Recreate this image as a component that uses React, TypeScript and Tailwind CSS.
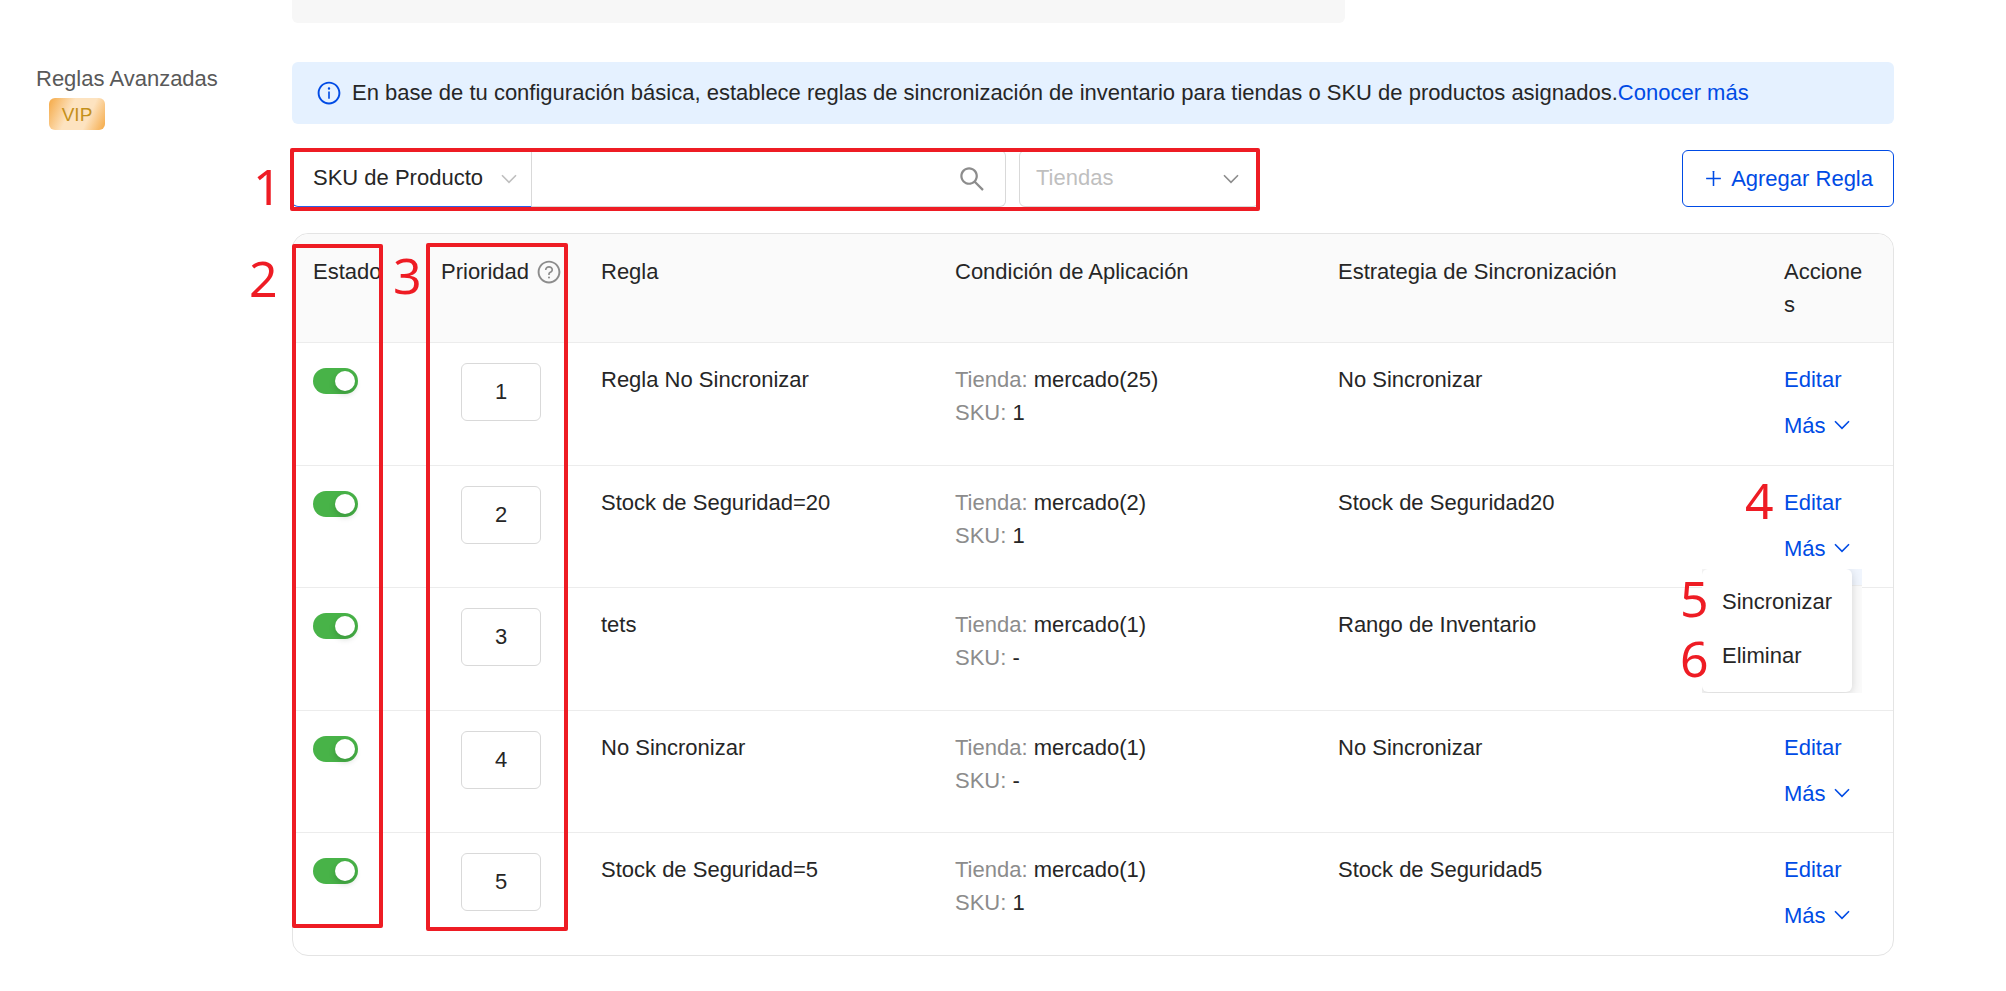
import React from "react";
import {
  AiOutlineInfoCircle,
  AiOutlinePlus,
  AiOutlineQuestionCircle,
  AiOutlineSearch,
} from "react-icons/ai";

type Rule = {
  priority: number;
  name: string;
  stores: string;
  sku: string;
  strategy: string;
  menuOpen?: boolean;
};

const rules: Rule[] = [
  {
    priority: 1,
    name: "Regla No Sincronizar",
    stores: "mercado(25)",
    sku: "1",
    strategy: "No Sincronizar",
  },
  {
    priority: 2,
    name: "Stock de Seguridad=20",
    stores: "mercado(2)",
    sku: "1",
    strategy: "Stock de Seguridad20",
    menuOpen: true,
  },
  {
    priority: 3,
    name: "tets",
    stores: "mercado(1)",
    sku: "-",
    strategy: "Rango de Inventario",
  },
  {
    priority: 4,
    name: "No Sincronizar",
    stores: "mercado(1)",
    sku: "-",
    strategy: "No Sincronizar",
  },
  {
    priority: 5,
    name: "Stock de Seguridad=5",
    stores: "mercado(1)",
    sku: "1",
    strategy: "Stock de Seguridad5",
  },
];

function Chevron({ className = "" }: { className?: string }) {
  return (
    <svg
      viewBox="0 0 16 10"
      fill="none"
      stroke="currentColor"
      strokeWidth="1.6"
      aria-hidden="true"
      className={`h-[10px] w-4 ${className}`}
    >
      <path d="M1 1.2 8 8.4l7-7.2" />
    </svg>
  );
}

function Mark({ className, children }: { className: string; children: React.ReactNode }) {
  return (
    <span
      className={`pointer-events-none absolute z-20 font-['Noto_Sans',sans-serif] text-[50px] leading-[52px] text-[#ee1c24] ${className}`}
    >
      {children}
    </span>
  );
}

function Outline({ className }: { className: string }) {
  return (
    <div
      className={`pointer-events-none absolute z-10 rounded-[2px] border-4 border-[#ee1c24] ${className}`}
    />
  );
}

function ActionsMenu() {
  return (
    <div className="absolute top-[103px] right-[31px] z-10 h-[124px] w-[160px] overflow-hidden bg-[#fafafa]">
      <div className="absolute top-0 right-0 h-[17px] w-5 border-b border-[#eeeeee] bg-[#f0f5fd]" />
      <div className="relative flex h-[123px] w-[150px] flex-col rounded-md bg-white pt-[6px] shadow-[0_2px_10px_rgba(0,0,0,0.16)]">
        <button type="button" className="h-[54px] px-5 text-left">
          Sincronizar
        </button>
        <button type="button" className="h-[54px] px-5 text-left">
          Eliminar
        </button>
      </div>
    </div>
  );
}

function RuleRow({ rule }: { rule: Rule }) {
  return (
    <tr className="h-[123px] border-b border-[#ececec] align-top last:border-b-0 even:h-[122px]">
      <td className="px-5 pt-[25px]">
        <input
          type="checkbox"
          role="switch"
          defaultChecked
          aria-label={`Estado de ${rule.name}`}
          className="block h-[26px] w-[45px] appearance-none rounded-full bg-[#bfbfbf] p-[3px] before:block before:size-5 before:rounded-full before:bg-white before:shadow-[0_3px_6px_rgba(0,35,11,0.2)] checked:bg-[#48b348] checked:before:ml-auto"
        />
      </td>
      <td className="px-5 pt-5">
        <input
          type="text"
          defaultValue={rule.priority}
          aria-label={`Prioridad de ${rule.name}`}
          className="mx-auto block h-[58px] w-20 rounded-md border border-[#d9d9d9] text-center"
        />
      </td>
      <td className="px-5 pt-5">{rule.name}</td>
      <td className="px-5 pt-5">
        <p>
          <span className="text-[#8c8c8c]">Tienda:</span> {rule.stores}
        </p>
        <p>
          <span className="text-[#8c8c8c]">SKU:</span> {rule.sku}
        </p>
      </td>
      <td className="px-5 pt-5">{rule.strategy}</td>
      <td className="relative px-5 pt-5">
        <div className="flex flex-col items-start gap-[13px] text-[#004be5]">
          <a href="#editar">Editar</a>
          <button type="button" className="flex items-center gap-2">
            Más
            <Chevron />
          </button>
        </div>
        {rule.menuOpen && (
          <>
            <ActionsMenu />
            <Mark className="top-[8px] -left-[19px]">4</Mark>
            <Mark className="top-[106px] -left-[84px]">5</Mark>
            <Mark className="top-[166px] -left-[84px]">6</Mark>
          </>
        )}
      </td>
    </tr>
  );
}

function Toolbar() {
  return (
    <div className="mt-[26px] flex items-start justify-between gap-6">
      <div className="relative flex">
        <div className="relative">
          <select
            aria-label="Buscar por"
            className="block h-[57px] w-[240px] appearance-none rounded-l-md border border-[#d9d9d9] border-b-[#2a62e8] bg-white pb-[2px] pl-5 outline-none"
          >
            <option>SKU de Producto</option>
          </select>
          <Chevron className="pointer-events-none absolute top-6 right-[15px] text-[#bfbfbf]" />
        </div>
        <div className="flex h-[57px] w-[474px] items-center rounded-r-md border border-l-0 border-[#d9d9d9] pr-[18px]">
          <input
            type="text"
            aria-label="SKU de Producto"
            className="h-full min-w-0 flex-1 px-4 outline-none"
          />
          <button type="button" aria-label="Buscar">
            <AiOutlineSearch className="size-[30px] text-[#8c8c8c]" />
          </button>
        </div>
        <div className="relative ml-[13px]">
          <select
            aria-label="Tiendas"
            className="block h-[57px] w-[240px] appearance-none rounded-md border border-[#d9d9d9] bg-white pb-[2px] pl-4 text-[#bfbfbf] outline-none"
          >
            <option>Tiendas</option>
          </select>
          <Chevron className="pointer-events-none absolute top-6 right-5 text-[#8c8c8c]" />
        </div>
        <Outline className="-top-[2px] -right-[1px] -bottom-1 -left-[2px]" />
        <Mark className="top-[10px] -left-[39px]">1</Mark>
      </div>
      <button
        type="button"
        className="flex h-[57px] items-center gap-[7px] rounded-md border border-[#004be5] px-5 text-[#004be5]"
      >
        <AiOutlinePlus className="size-[21px]" />
        Agregar Regla
      </button>
    </div>
  );
}

function RulesTable() {
  return (
    <div className="relative mt-[26px]">
      <div className="rounded-2xl border border-[#e4e4e4]">
        <table className="w-full table-fixed border-collapse text-left">
          <thead>
            <tr className="h-[108px] border-b border-[#ececec] align-top">
              <th className="w-32 rounded-tl-2xl bg-[#fafafa] px-5 pt-[21px] font-normal">
                Estado
              </th>
              <th className="w-40 bg-[#fafafa] px-5 pt-[21px] font-normal">
                <span className="flex items-center gap-[7px]">
                  Prioridad
                  <AiOutlineQuestionCircle className="size-[26px] shrink-0 text-[#8c8c8c]" />
                </span>
              </th>
              <th className="w-[354px] bg-[#fafafa] px-5 pt-[21px] font-normal">Regla</th>
              <th className="w-[383px] bg-[#fafafa] px-5 pt-[21px] font-normal">
                Condición de Aplicación
              </th>
              <th className="bg-[#fafafa] px-5 pt-[21px] font-normal">
                Estrategia de Sincronización
              </th>
              <th className="w-[129px] rounded-tr-2xl bg-[#fafafa] pt-[21px] pr-6 pl-5 font-normal break-all">
                Acciones
              </th>
            </tr>
          </thead>
          <tbody>
            {rules.map((rule) => (
              <RuleRow key={rule.priority} rule={rule} />
            ))}
          </tbody>
        </table>
      </div>
      <Outline className="top-[11px] bottom-7 left-0 w-[91px]" />
      <Outline className="top-[10px] bottom-[25px] left-[134px] w-[142px]" />
      <Mark className="top-[19px] -left-[43px]">2</Mark>
      <Mark className="top-[16px] left-[101px]">3</Mark>
    </div>
  );
}

export default function App() {
  return (
    <div className="min-h-screen bg-white pb-9 font-['Liberation_Sans',Arial,sans-serif] text-[22px] leading-[33px] text-[#262626]">
      <div className="pr-28 pl-[292px]">
        <div className="h-[23px] w-[1053px] max-w-full rounded-b-md bg-[#f7f7f7]" />
      </div>
      <div className="mt-[39px] flex pr-28">
        <div className="w-[292px] shrink-0 pl-9 text-[#595959]">
          <h2>Reglas Avanzadas</h2>
          <span className="mt-[3px] ml-[13px] inline-flex h-8 w-14 items-center justify-center rounded-md bg-[linear-gradient(115deg,#f5a945_0%,#fde3c0_38%,#fde3c0_68%,#f5a945_100%)] text-[19px] text-[#c4901a]">
            VIP
          </span>
        </div>
        <main className="min-w-0 flex-1">
          <div className="flex min-h-[62px] items-center gap-[10px] rounded-md bg-[#e5f1ff] px-6">
            <AiOutlineInfoCircle className="size-[26px] shrink-0 text-[#004be5]" />
            <p className="pb-[2px]">
              En base de tu configuración básica, establece reglas de sincronización de
              inventario para tiendas o SKU de productos asignados.
              <a href="#conocer-mas" className="text-[#004be5]">
                Conocer más
              </a>
            </p>
          </div>
          <Toolbar />
          <RulesTable />
        </main>
      </div>
    </div>
  );
}
